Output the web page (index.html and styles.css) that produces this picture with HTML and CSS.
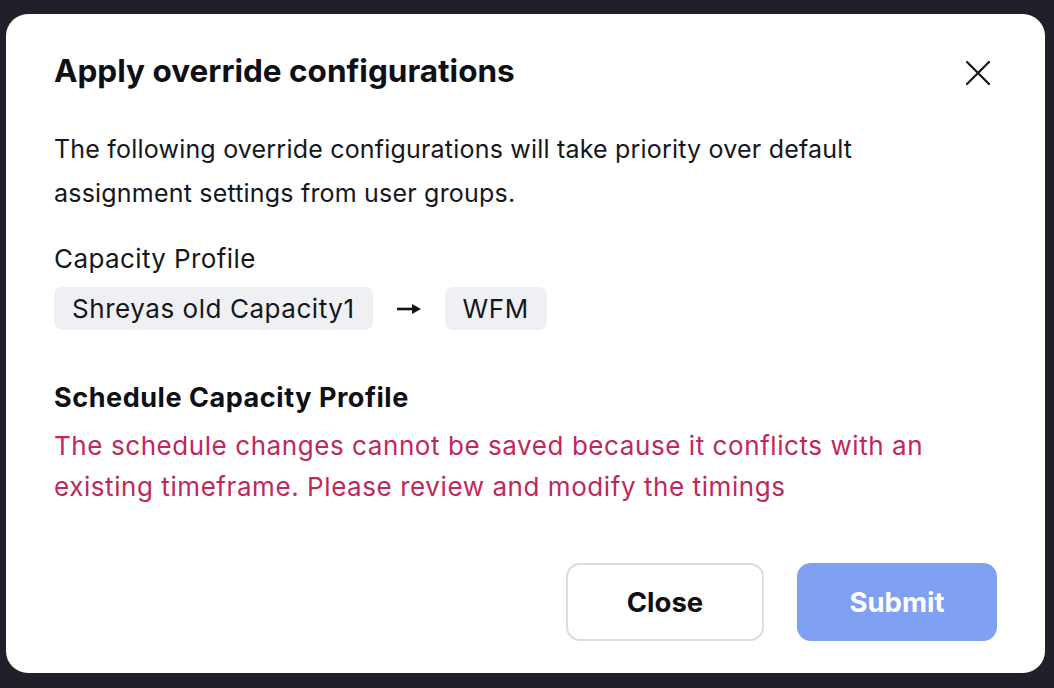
FILE: index.html
```html
<!DOCTYPE html>
<html lang="en">
<head>
    <meta charset="UTF-8">
    <title>Apply override configurations</title>
    <link rel="stylesheet" href="styles.css">
</head>
<body>
    <div class="modal">
        <div class="modal-header">
            <h1 class="modal-title">Apply override configurations</h1>
            <button class="icon-btn" aria-label="Close">
                <svg width="24" height="24" viewBox="0 0 24 24" fill="none" stroke="#111318" stroke-width="2.2" stroke-linecap="round">
                    <path d="M1 1L23 23M23 1L1 23"/>
                </svg>
            </button>
        </div>
        <p class="desc">The following override configurations will take priority over default assignment settings from user groups.</p>

        <div class="field-label">Capacity Profile</div>
        <div class="change-row">
            <span class="chip">Shreyas old Capacity1</span>
            <svg class="arrow" width="24" height="12" viewBox="0 0 24 12">
                <path d="M0 6H17" stroke="#111318" stroke-width="2.6"/>
                <path d="M15 1L24 6L15 11Z" fill="#111318"/>
            </svg>
            <span class="chip">WFM</span>
        </div>

        <div class="section-title">Schedule Capacity Profile</div>
        <p class="error">The schedule changes cannot be saved because it conflicts with an existing timeframe. Please review and modify the timings</p>

        <div class="modal-footer">
            <button class="btn btn-secondary">Close</button>
            <button class="btn btn-primary" disabled>Submit</button>
        </div>
    </div>
</body>
</html>
```

FILE: styles.css
```css
html, body {
    height: 100%;
}
body {
    margin: 0;
    padding: 14px 9px 15px 6px;
    box-sizing: border-box;
    background: #202128;
    font-family: Inter, "Noto Sans", sans-serif;
    color: #15171c;
}
.modal {
    height: 659px;
    box-sizing: border-box;
    background: #fff;
    border-radius: 22px;
    padding: 39px 48px 32px 48px;
    display: flex;
    flex-direction: column;
}
.modal-header {
    display: flex;
    justify-content: space-between;
    align-items: center;
    height: 36px;
}
.modal-title {
    margin: 0;
    font-size: 31.5px;
    line-height: 36px;
    font-weight: 700;
    color: #0e1016;
}
.icon-btn {
    width: 40px;
    height: 40px;
    margin-top: 4px;
    margin-right: -1px;
    padding: 0;
    border: none;
    background: none;
    display: flex;
    align-items: center;
    justify-content: center;
    cursor: pointer;
}
.desc {
    margin: 38px 0 0;
    font-size: 25px;
    letter-spacing: 0.2px;
    line-height: 44px;
    max-width: 830px;
}
.field-label {
    margin-top: 28px;
    font-size: 26px;
    letter-spacing: 0.4px;
    line-height: 32px;
}
.change-row {
    margin-top: 12px;
    display: flex;
    align-items: center;
    gap: 24px;
}
.chip {
    height: 43px;
    padding: 0 18px;
    border-radius: 8px;
    background: #eef0f3;
    font-size: 26px;
    letter-spacing: 0.55px;
    line-height: 43px;
}
.section-title {
    margin-top: 52px;
    font-size: 27px;
    letter-spacing: 0.55px;
    line-height: 32px;
    font-weight: 700;
    color: #0e1016;
}
.error {
    margin: 11px 0 0;
    font-size: 26px;
    letter-spacing: 0.57px;
    line-height: 41px;
    color: #c0285c;
    max-width: 920px;
}
.modal-footer {
    margin-top: auto;
    display: flex;
    justify-content: flex-end;
    gap: 33px;
}
.btn {
    height: 78px;
    border-radius: 14px;
    font-family: inherit;
    font-size: 27.5px;
    font-weight: 700;
    cursor: pointer;
}
.btn-secondary {
    width: 198px;
    background: #fff;
    border: 2px solid #dcdcdf;
    color: #0e1016;
}
.btn-primary {
    width: 200px;
    background: #80a0f3;
    border: none;
    color: #fff;
}
```
